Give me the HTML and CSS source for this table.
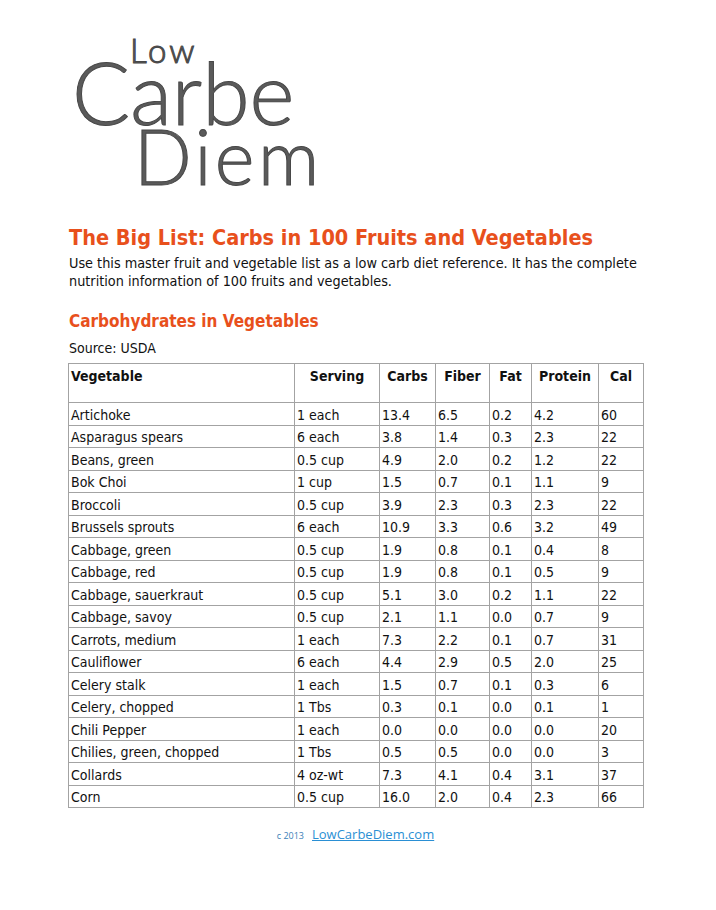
FILE: index.html
```html
<!DOCTYPE html>
<html>
<head>
<meta charset="utf-8">
<link rel="stylesheet" href="styles.css">
</head>
<body>
<div class="page">
  <div class="logo">
    <svg class="logo-svg" width="270" height="180" viewBox="0 0 270 180" xmlns="http://www.w3.org/2000/svg">
      <text x="62" y="33" class="lg-low">Low</text>
      <text x="4" y="95" class="lg-carbe">Carbe</text>
      <text x="66" y="155" class="lg-diem">Diem</text>
    </svg>
  </div>
  <h1 class="title">The Big List: Carbs in 100 Fruits and Vegetables</h1>
  <p class="intro">Use this master fruit and vegetable list as a low carb diet reference. It has the complete nutrition information of 100 fruits and vegetables.</p>
  <h2 class="subtitle">Carbohydrates in Vegetables</h2>
  <p class="source">Source: USDA</p>
  <table class="veg">
    <colgroup>
      <col class="c1"><col class="c2"><col class="c3"><col class="c4"><col class="c5"><col class="c6"><col class="c7">
    </colgroup>
    <thead>
      <tr><th class="left">Vegetable</th><th>Serving</th><th>Carbs</th><th>Fiber</th><th>Fat</th><th>Protein</th><th>Cal</th></tr>
    </thead>
    <tbody>
      <tr><td>Artichoke</td><td>1 each</td><td>13.4</td><td>6.5</td><td>0.2</td><td>4.2</td><td>60</td></tr>
      <tr><td>Asparagus spears</td><td>6 each</td><td>3.8</td><td>1.4</td><td>0.3</td><td>2.3</td><td>22</td></tr>
      <tr><td>Beans, green</td><td>0.5 cup</td><td>4.9</td><td>2.0</td><td>0.2</td><td>1.2</td><td>22</td></tr>
      <tr><td>Bok Choi</td><td>1 cup</td><td>1.5</td><td>0.7</td><td>0.1</td><td>1.1</td><td>9</td></tr>
      <tr><td>Broccoli</td><td>0.5 cup</td><td>3.9</td><td>2.3</td><td>0.3</td><td>2.3</td><td>22</td></tr>
      <tr><td>Brussels sprouts</td><td>6 each</td><td>10.9</td><td>3.3</td><td>0.6</td><td>3.2</td><td>49</td></tr>
      <tr><td>Cabbage, green</td><td>0.5 cup</td><td>1.9</td><td>0.8</td><td>0.1</td><td>0.4</td><td>8</td></tr>
      <tr><td>Cabbage, red</td><td>0.5 cup</td><td>1.9</td><td>0.8</td><td>0.1</td><td>0.5</td><td>9</td></tr>
      <tr><td>Cabbage, sauerkraut</td><td>0.5 cup</td><td>5.1</td><td>3.0</td><td>0.2</td><td>1.1</td><td>22</td></tr>
      <tr><td>Cabbage, savoy</td><td>0.5 cup</td><td>2.1</td><td>1.1</td><td>0.0</td><td>0.7</td><td>9</td></tr>
      <tr><td>Carrots, medium</td><td>1 each</td><td>7.3</td><td>2.2</td><td>0.1</td><td>0.7</td><td>31</td></tr>
      <tr><td>Cauliflower</td><td>6 each</td><td>4.4</td><td>2.9</td><td>0.5</td><td>2.0</td><td>25</td></tr>
      <tr><td>Celery stalk</td><td>1 each</td><td>1.5</td><td>0.7</td><td>0.1</td><td>0.3</td><td>6</td></tr>
      <tr><td>Celery, chopped</td><td>1 Tbs</td><td>0.3</td><td>0.1</td><td>0.0</td><td>0.1</td><td>1</td></tr>
      <tr><td>Chili Pepper</td><td>1 each</td><td>0.0</td><td>0.0</td><td>0.0</td><td>0.0</td><td>20</td></tr>
      <tr><td>Chilies, green, chopped</td><td>1 Tbs</td><td>0.5</td><td>0.5</td><td>0.0</td><td>0.0</td><td>3</td></tr>
      <tr><td>Collards</td><td>4 oz-wt</td><td>7.3</td><td>4.1</td><td>0.4</td><td>3.1</td><td>37</td></tr>
      <tr><td>Corn</td><td>0.5 cup</td><td>16.0</td><td>2.0</td><td>0.4</td><td>2.3</td><td>66</td></tr>
    </tbody>
  </table>
  <div class="footer"><span class="copy">c 2013</span><a class="site" href="#">LowCarbeDiem.com</a></div>
</div>
</body>
</html>
```

FILE: styles.css
```css
html, body {
  margin: 0;
  padding: 0;
  background: #ffffff;
}
.page {
  width: 575px;
  margin-left: 68px;
  font-family: "DejaVu Sans Condensed", "DejaVu Sans", sans-serif;
  color: #111;
}
.logo {
  padding-top: 30px;
}
.logo-svg {
  display: block;
  overflow: visible;
}
.logo-svg text {
  font-family: "Lato", "Open Sans", sans-serif;
  font-weight: 300;
  fill: #5a5a5a;
  stroke: #474747;
  stroke-width: 1px;
}
.lg-low {
  font-size: 33px;
  letter-spacing: 3px;
}
.lg-carbe {
  font-size: 86px;
  letter-spacing: 0;
}
.lg-diem {
  font-size: 76px;
  letter-spacing: 3.5px;
}
.title {
  margin: 14px 0 0 1px;
  font-size: 21.5px;
  font-weight: bold;
  color: #e8501c;
  line-height: 28px;
}
.intro {
  margin: 2px 0 0 1px;
  font-size: 14.3px;
  line-height: 18px;
}
.subtitle {
  margin: 20px 0 0 1px;
  font-size: 17px;
  font-weight: bold;
  color: #e8501c;
  line-height: 22px;
}
.source {
  margin: 7px 0 0 1px;
  font-size: 14px;
  line-height: 18px;
}
.veg {
  margin-top: 6px;
  border-collapse: collapse;
  width: 575px;
  table-layout: fixed;
  font-size: 14px;
}
.c1 { width: 226px; }
.c2 { width: 85px; }
.c3 { width: 56px; }
.c4 { width: 54px; }
.c5 { width: 42px; }
.c6 { width: 67px; }
.c7 { width: 45px; }
.veg th, .veg td {
  border: 1px solid #a3a3a3;
  padding: 3.5px 2px 0.5px;
  line-height: 17.5px;
  white-space: nowrap;
  overflow: hidden;
}
.veg th {
  height: 33px;
  vertical-align: top;
  text-align: center;
  padding-top: 4px;
  padding-bottom: 1px;
  font-weight: bold;
}
.veg th.left {
  text-align: left;
}
.veg td {
  text-align: left;
}
.footer {
  margin-top: 14px;
  text-align: center;
  font-family: "Open Sans", sans-serif;
}
.copy {
  font-size: 9px;
  color: #3d7fb8;
  margin-right: 8px;
}
.site {
  font-size: 13px;
  color: #2a8fd4;
  text-decoration: underline;
}
```
